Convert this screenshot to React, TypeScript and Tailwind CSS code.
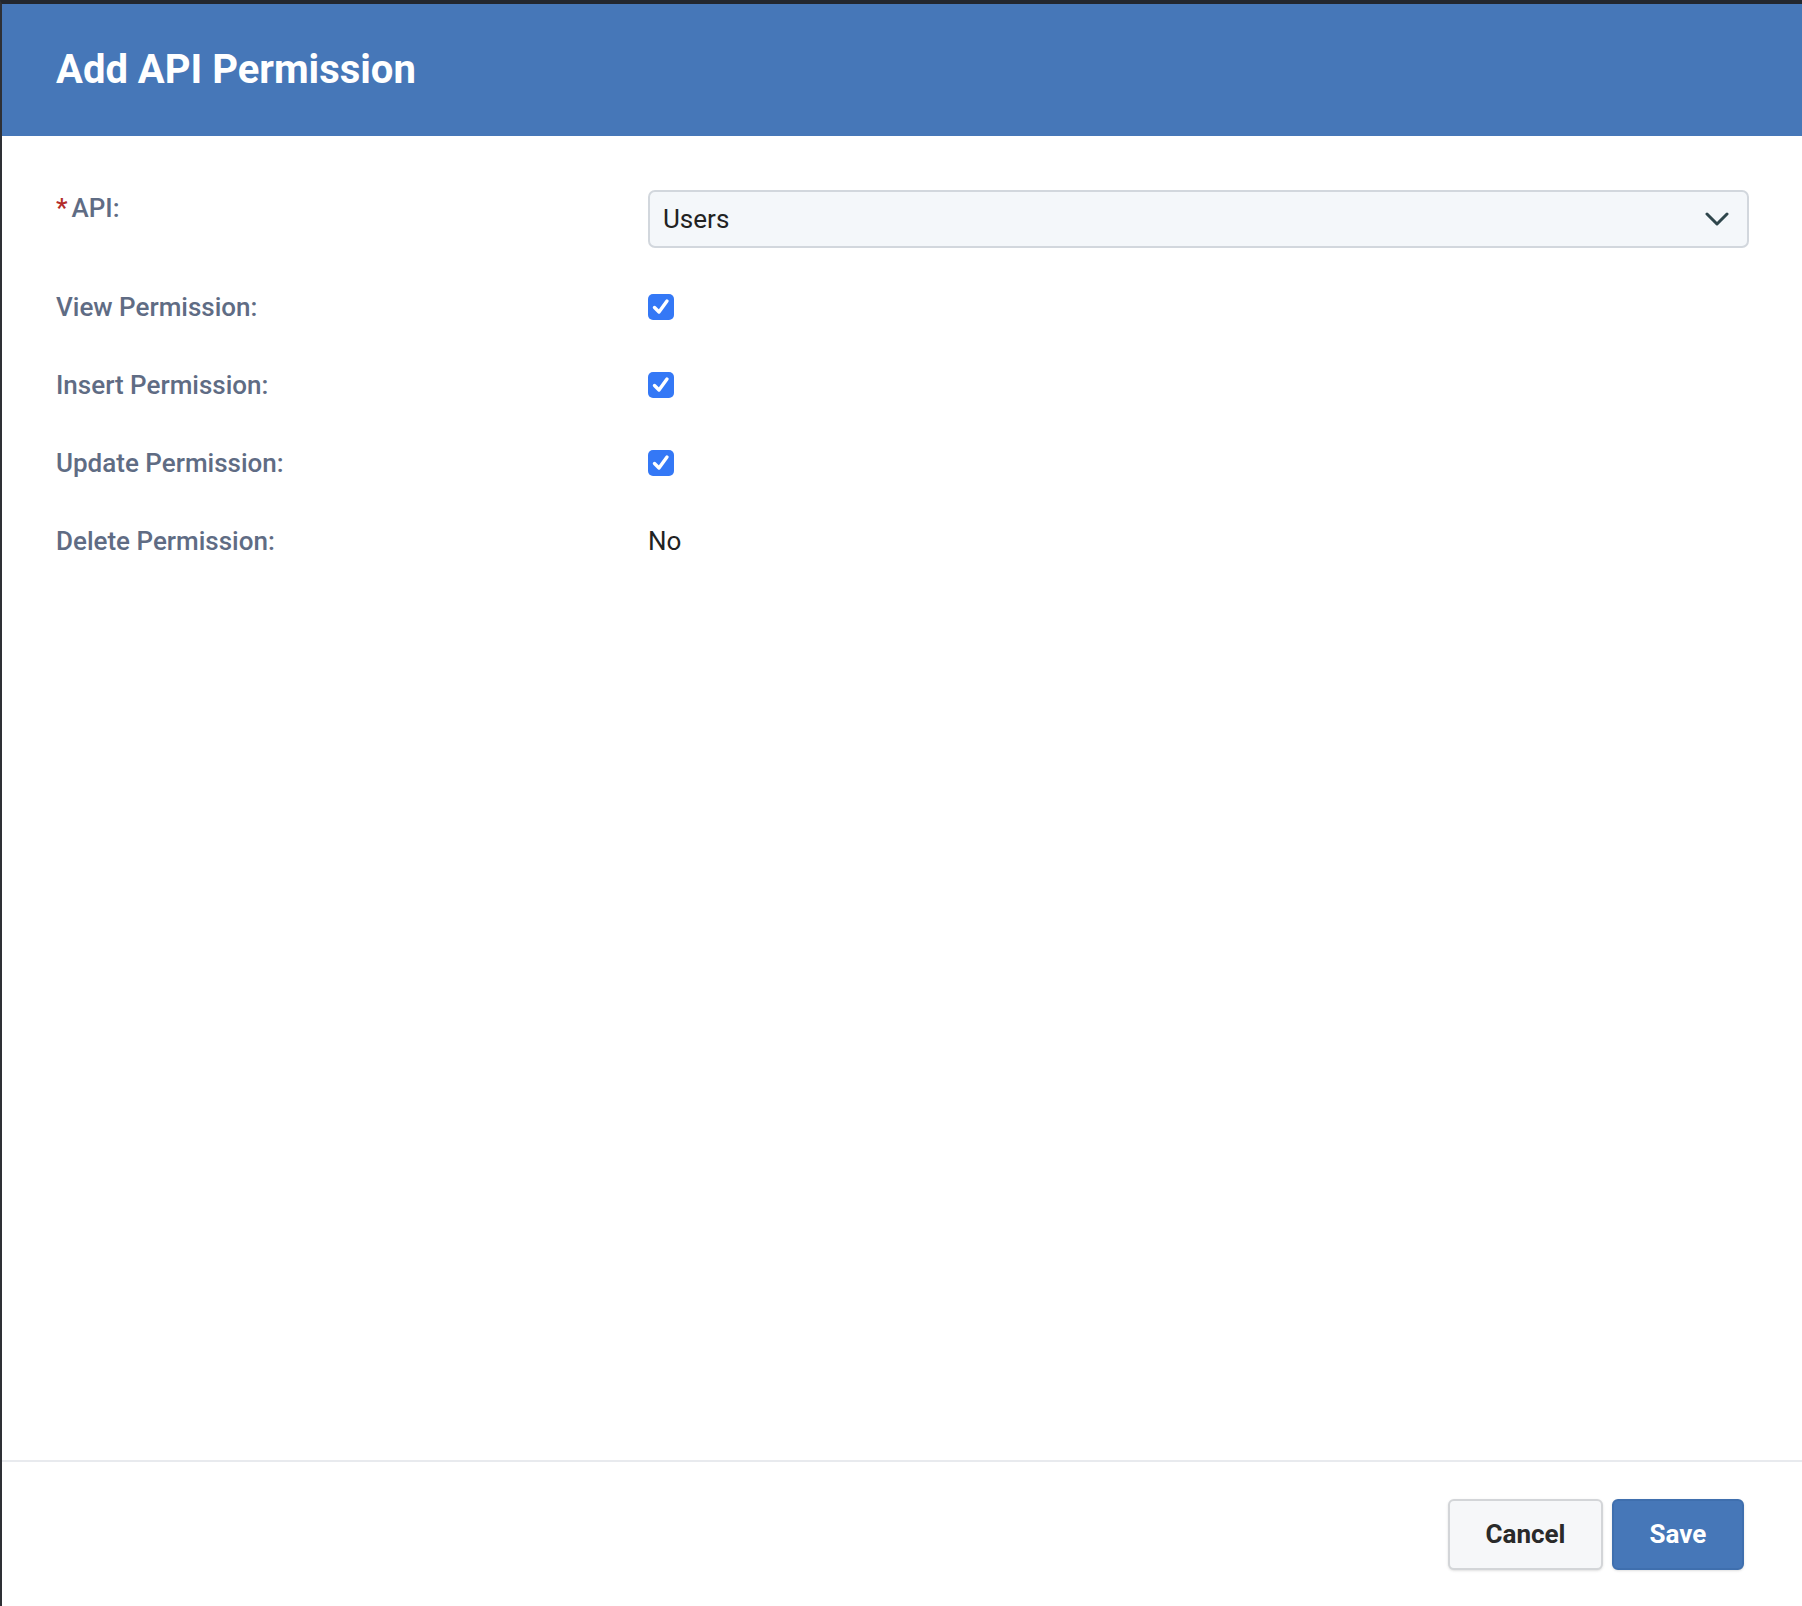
import React from 'react';

const rows = [
  { label: 'View Permission:', checked: true },
  { label: 'Insert Permission:', checked: true },
  { label: 'Update Permission:', checked: true },
];

const CheckBox = () => (
  <span className="flex h-[26px] w-[26px] items-center justify-center rounded-[5px] bg-[#3478f6]">
    <svg width="20" height="20" viewBox="0 0 20 20" fill="none">
      <path d="M3.5 10.5 L8 15 L16 4" stroke="white" strokeWidth="3.4" strokeLinecap="round" strokeLinejoin="round" />
    </svg>
  </span>
);

export default function App() {
  return (
    <div className="flex h-[1606px] w-[1802px] flex-col border-l-2 border-t-4 border-l-[#2e3035] border-t-[#23272e] bg-white font-['Roboto',sans-serif]">
      {/* header */}
      <div className="flex h-[132px] items-center bg-[#4677b8] pl-[54px]">
        <h1 className="text-[40px] font-bold text-white">Add API Permission</h1>
      </div>

      {/* form body */}
      <div className="flex-1 pl-[54px] pr-[53px] pt-[54px]">
        <div className="flex items-start">
          <label className="w-[592px] text-[26px] font-medium leading-[36px] text-[#5f6c84]">
            <span className="mr-[4px] text-[#b32d2a]">*</span>API:
          </label>
          <div className="flex h-[58px] flex-1 items-center justify-between rounded-[7px] border-2 border-[#d2d7dd] bg-[#f4f7fa] pl-[13px] pr-[18px]">
            <span className="text-[26px] text-[#222]">Users</span>
            <svg width="24" height="16" viewBox="0 0 24 16" fill="none">
              <path d="M2 3 L12 13 L22 3" stroke="#2f464c" strokeWidth="3" strokeLinecap="round" strokeLinejoin="round" />
            </svg>
          </div>
        </div>

        <div className="mt-[20px] flex flex-col">
          {rows.map((r) => (
            <div key={r.label} className="flex h-[78px] items-center">
              <label className="w-[592px] text-[26px] font-medium text-[#5f6c84]">{r.label}</label>
              <CheckBox />
            </div>
          ))}
          <div className="flex h-[78px] items-center">
            <label className="w-[592px] text-[26px] font-medium text-[#5f6c84]">Delete Permission:</label>
            <span className="text-[26px] text-[#222]">No</span>
          </div>
        </div>
      </div>

      {/* footer */}
      <div className="flex h-[146px] items-center justify-end gap-[9px] border-t-2 border-[#e8eaee] pr-[58px]">
        <button className="h-[71px] w-[155px] rounded-[6px] border-2 border-[#d3d5d8] bg-[#f6f7f9] text-[26px] font-bold text-[#2a2a2a] shadow-sm">
          Cancel
        </button>
        <button className="h-[71px] w-[132px] rounded-[6px] border-2 border-[#3f6fae] bg-[#4677b8] text-[26px] font-bold text-white shadow-sm">
          Save
        </button>
      </div>
    </div>
  );
}
